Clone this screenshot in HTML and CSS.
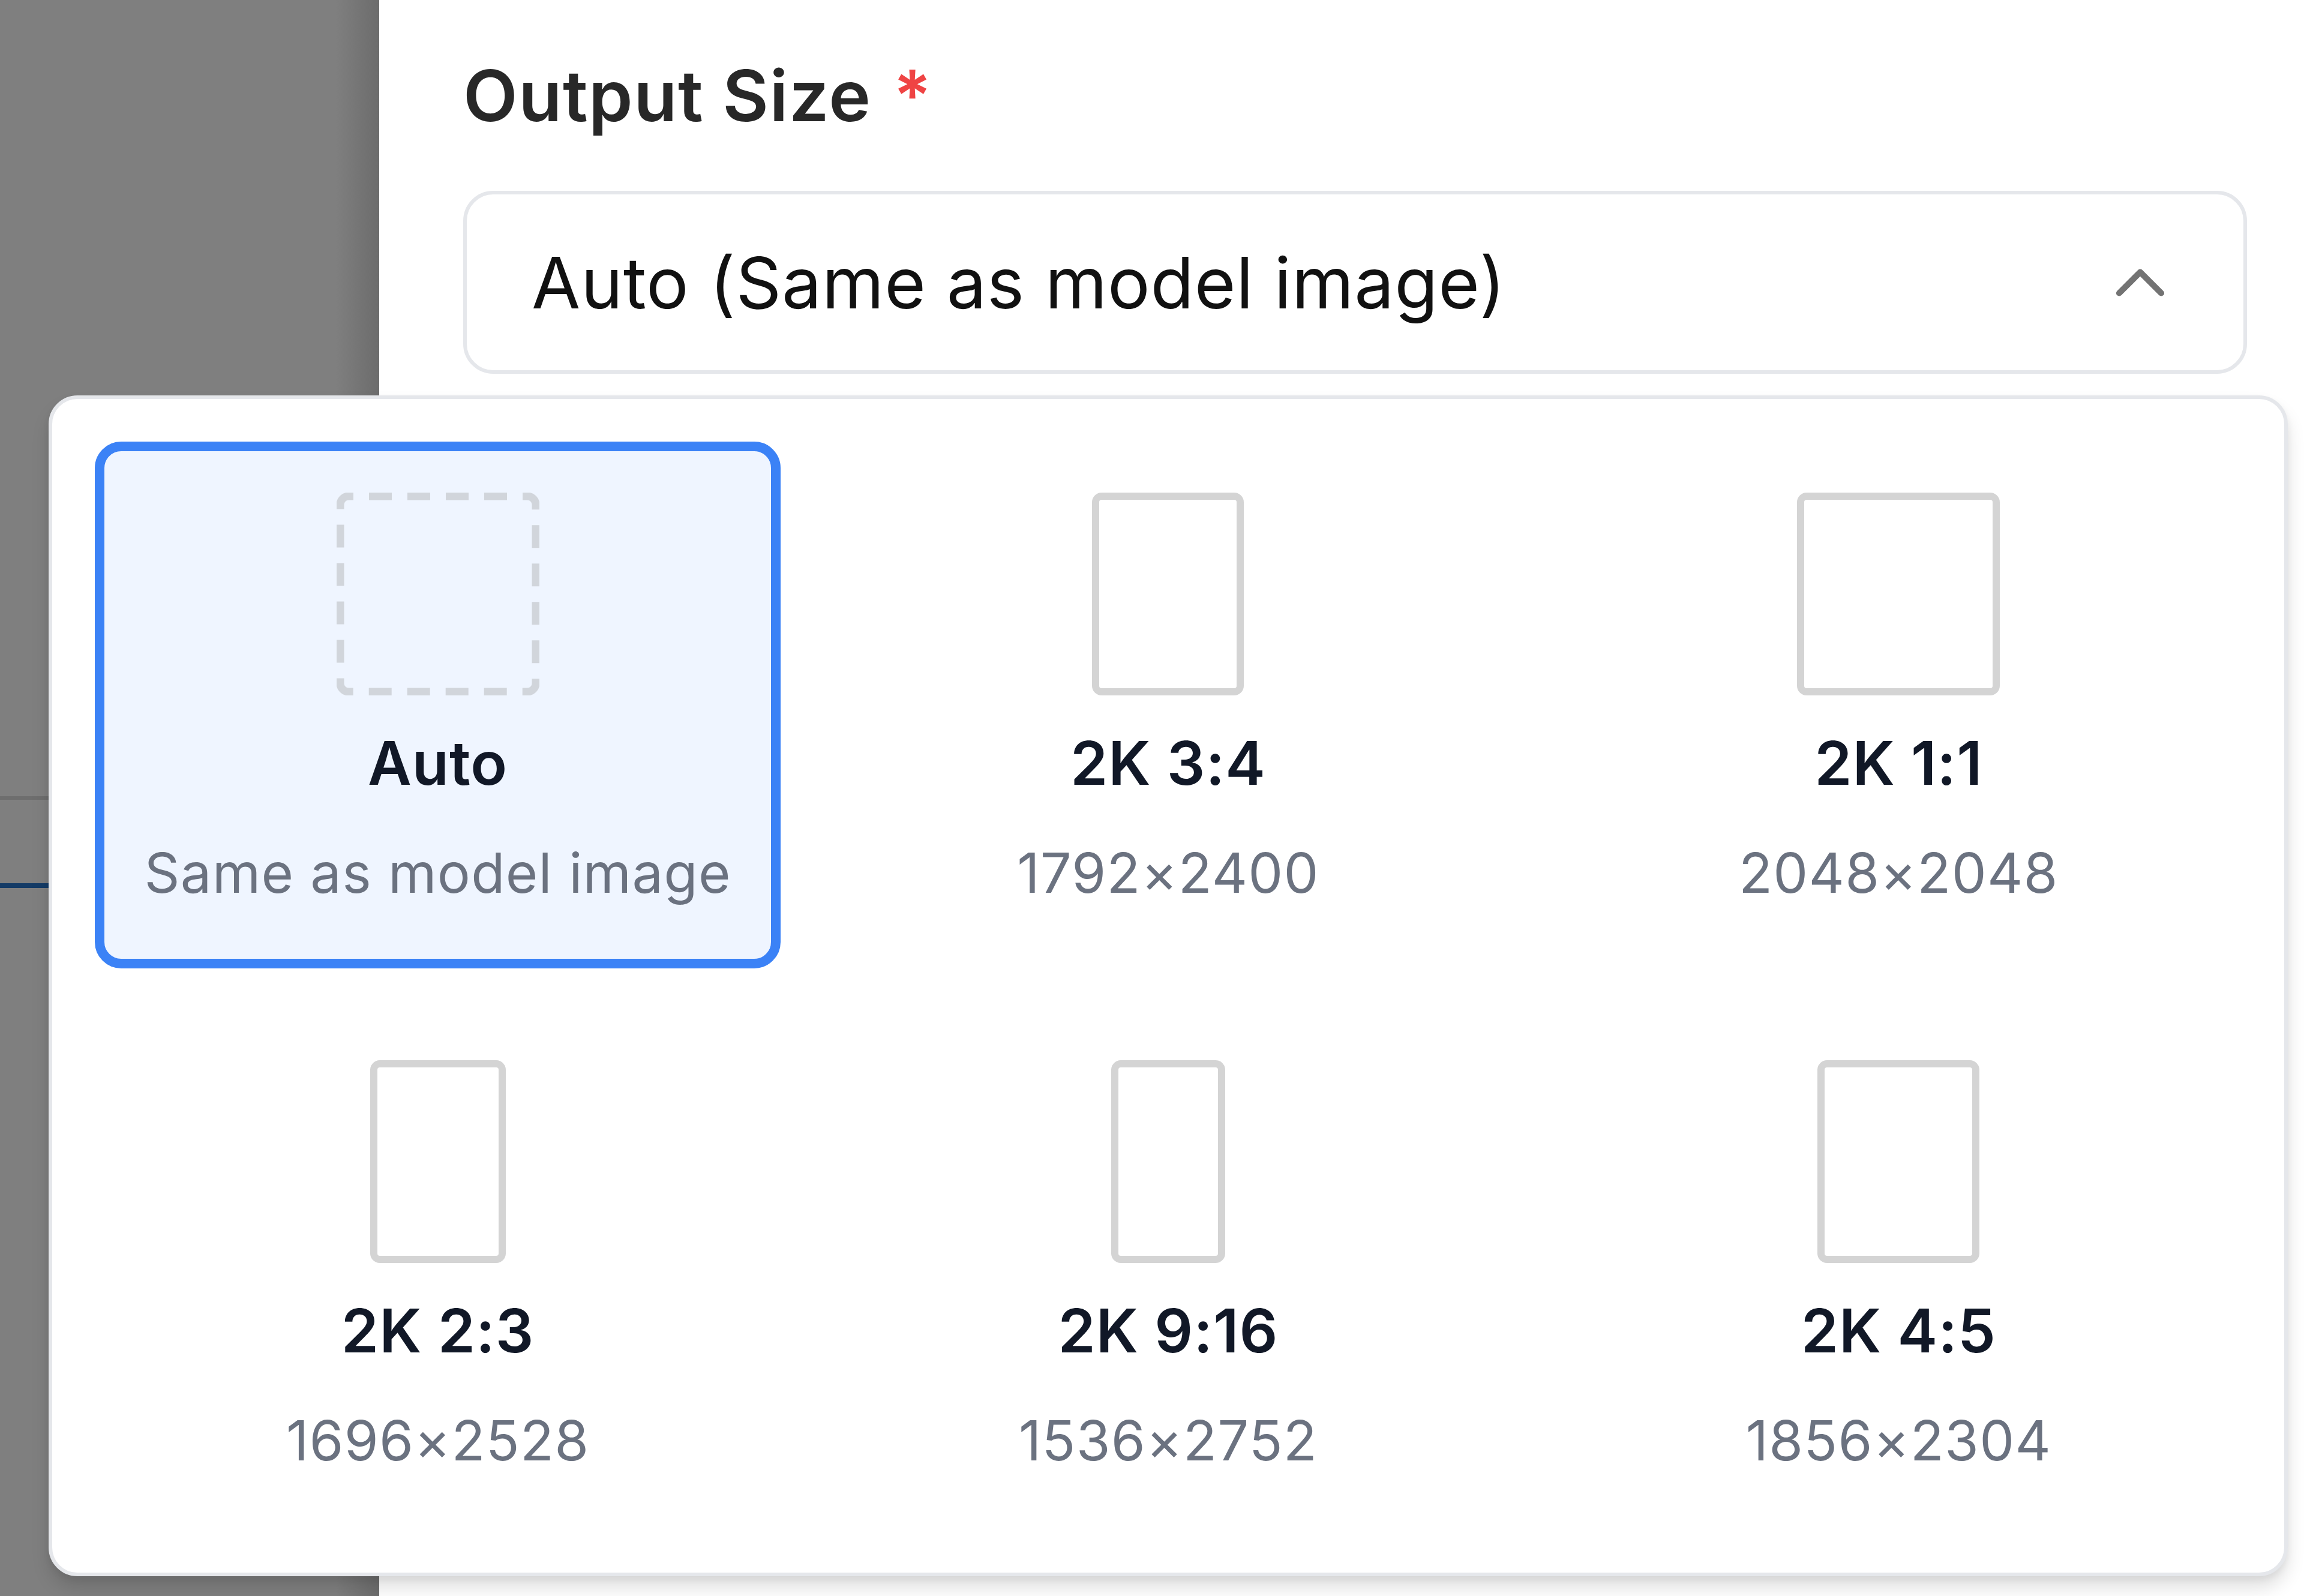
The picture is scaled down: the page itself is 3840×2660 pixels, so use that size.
FILE: index.html
```html
<!DOCTYPE html>
<html lang="en">
<head>
<meta charset="utf-8">
<title>Output Size</title>
<link rel="stylesheet" href="styles.css">
</head>
<body>
<div class="page">
  <div class="backdrop">
    <div class="bg-rule"></div>
    <div class="bg-accent"></div>
  </div>
  <div class="drawer">
    <div class="field-label">Output Size <span class="req">*</span></div>
    <div class="select">
      <span class="select-value">Auto (Same as model image)</span>
      <svg class="chevron" viewBox="0 0 24 24"><polyline points="6 15 12 9 18 15"/></svg>
    </div>
  </div>
  <div class="popover">
    <div class="size-grid">
      <div class="size-option selected">
        <div class="ratio-icon dashed">
          <svg viewBox="0 0 338 338" width="338" height="338"><rect x="6" y="6" width="326" height="326" rx="14" ry="14"/></svg>
        </div>
        <div class="size-title">Auto</div>
        <div class="size-sub">Same as model image</div>
      </div>
      <div class="size-option">
        <div class="ratio-icon" style="width: 253px"></div>
        <div class="size-title">2K 3:4</div>
        <div class="size-sub">1792×2400</div>
      </div>
      <div class="size-option">
        <div class="ratio-icon" style="width: 338px"></div>
        <div class="size-title">2K 1:1</div>
        <div class="size-sub">2048×2048</div>
      </div>
      <div class="size-option">
        <div class="ratio-icon" style="width: 226px"></div>
        <div class="size-title">2K 2:3</div>
        <div class="size-sub">1696×2528</div>
      </div>
      <div class="size-option">
        <div class="ratio-icon" style="width: 190px"></div>
        <div class="size-title">2K 9:16</div>
        <div class="size-sub">1536×2752</div>
      </div>
      <div class="size-option">
        <div class="ratio-icon" style="width: 270px"></div>
        <div class="size-title">2K 4:5</div>
        <div class="size-sub">1856×2304</div>
      </div>
    </div>
  </div>
</div>
</body>
</html>
```
FILE: styles.css
```css
* { box-sizing: border-box; }

html, body { margin: 0; padding: 0; }

body {
  width: 3840px;
  height: 2660px;
  overflow: hidden;
  background: #ffffff;
  font-family: Inter, "Noto Sans", "Liberation Sans", sans-serif;
}

.page {
  position: relative;
  display: flex;
  width: 3840px;
  height: 2660px;
}

.backdrop {
  flex: none;
  width: 632px;
  padding-top: 1327px;
  background: linear-gradient(to right, #7f7f7f 0, #7f7f7f 560px, #6c6c6c 632px);
}

.bg-rule {
  height: 6px;
  background: #6e6e6e;
}

.bg-accent {
  height: 8px;
  margin-top: 139px;
  background: #143b66;
}

.drawer {
  flex: 1;
  padding: 77px 95px 0 140px;
  background: #ffffff;
}

.field-label {
  font-size: 118px;
  font-weight: 600;
  line-height: 165px;
  color: #282828;
  letter-spacing: 1.5px;
}

.req {
  color: #ef4444;
  margin-left: 5px;
}

.select {
  margin-top: 76px;
  height: 305px;
  border: 6px solid #e5e7eb;
  border-radius: 50px;
  display: flex;
  align-items: center;
  justify-content: space-between;
  padding: 0 102px 0 108px;
}

.select-value {
  font-size: 118px;
  color: #111111;
  letter-spacing: 0.8px;
}

.chevron {
  width: 140px;
  height: 140px;
  fill: none;
  stroke: #737373;
  stroke-width: 1.75;
  stroke-linecap: round;
  stroke-linejoin: round;
}

.popover {
  position: absolute;
  left: 81px;
  top: 659px;
  width: 3732px;
  padding: 71px 71px 61px;
  background: #ffffff;
  border: 6px solid #e5e7eb;
  border-radius: 48px;
  box-shadow: 0 20px 30px rgba(0, 0, 0, 0.12), 0 6px 12px rgba(0, 0, 0, 0.06);
}

.size-grid {
  display: grid;
  grid-template-columns: repeat(3, 1fr);
  gap: 68px 74px;
}

.size-option {
  display: flex;
  flex-direction: column;
  align-items: center;
  border: 16px solid transparent;
  border-radius: 44px;
  padding: 69px 20px 79px;
}

.size-option.selected {
  border-color: #3b82f6;
  background: #eff5ff;
}

.ratio-icon {
  height: 338px;
  border: 12px solid #d4d4d4;
  border-radius: 16px;
}

.ratio-icon.dashed {
  width: 338px;
  border: none;
  border-radius: 0;
}

.ratio-icon.dashed svg {
  display: block;
}

.ratio-icon.dashed rect {
  fill: none;
  stroke: #d1d5db;
  stroke-width: 13;
  stroke-dasharray: 38 26;
  stroke-dashoffset: 30;
}

.size-title {
  margin-top: 43px;
  font-size: 100px;
  font-weight: 600;
  line-height: 140px;
  color: #111827;
  letter-spacing: 1px;
}

.size-sub {
  margin-top: 49px;
  font-size: 92px;
  line-height: 128px;
  color: #6b7280;
  letter-spacing: 1.2px;
}
```
